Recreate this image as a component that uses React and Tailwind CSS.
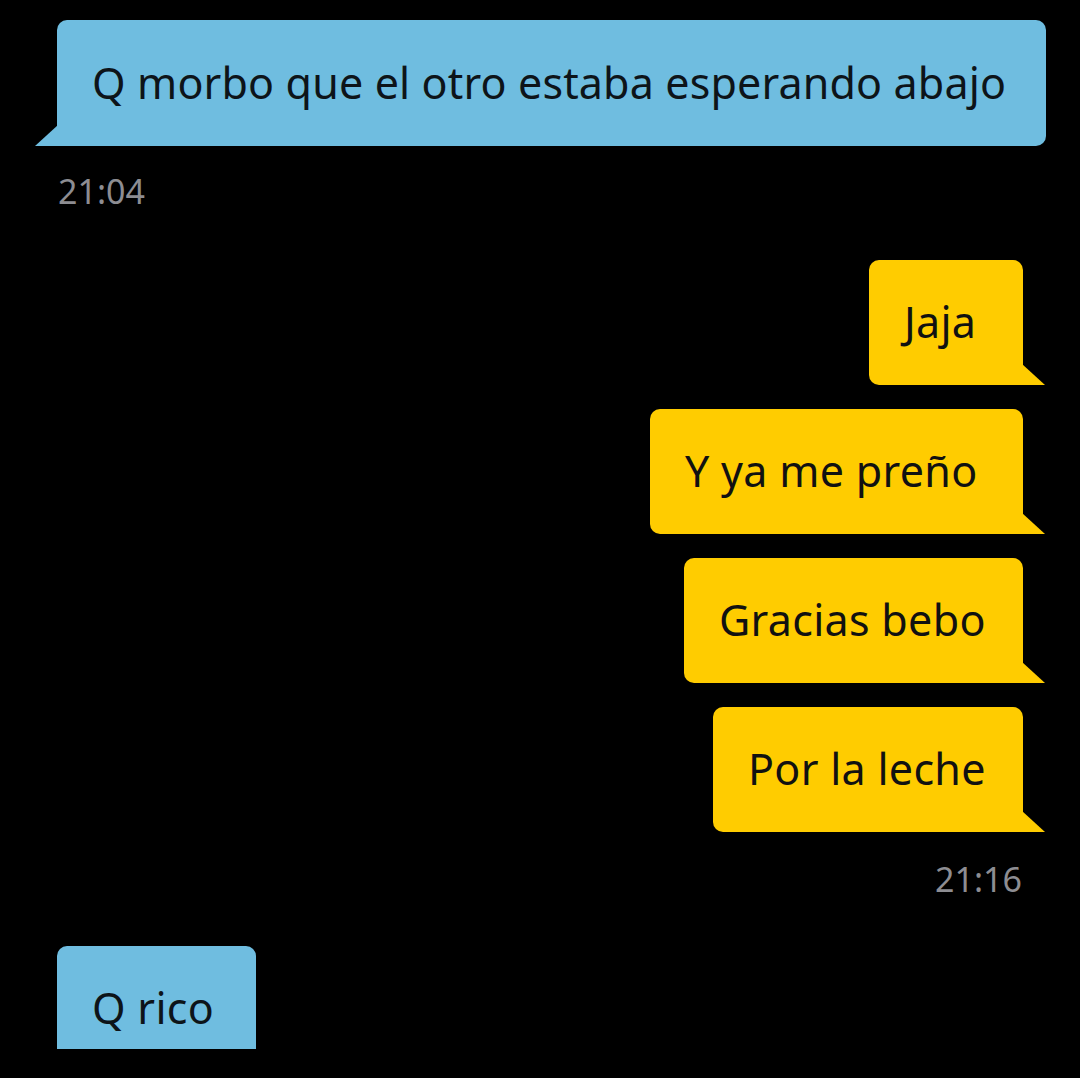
export default function App() {
  const font = { fontFamily: '"Noto Sans", "Open Sans", sans-serif' };

  const TailLeft = ({ color }) => (
    <svg className="absolute left-[-22px] bottom-0" width="23" height="21" viewBox="0 0 23 21">
      <polygon points="23,0 0,21 23,21" fill={color} />
    </svg>
  );

  const TailRight = ({ color }) => (
    <svg className="absolute right-[-22px] bottom-0" width="23" height="21" viewBox="0 0 23 21">
      <polygon points="0,0 23,21 0,21" fill={color} />
    </svg>
  );

  const Mine = ({ text, width }) => (
    <div
      className={`relative flex h-[125px] items-center rounded-t-[10px] rounded-bl-[10px] bg-[#ffcc00] px-[35px] text-[43px] tracking-[0.3px] whitespace-nowrap text-[#111111] ${width}`}
    >
      <span>{text}</span>
      <TailRight color="#ffcc00" />
    </div>
  );

  return (
    <div className="h-[1078px] w-[1080px] overflow-hidden bg-black pt-[20px]" style={font}>
      <div className="pl-[57px] pr-[34px]">
        <div className="relative flex h-[126px] items-center rounded-t-[10px] rounded-br-[10px] bg-[#6fbde0] px-[35px] text-[43px] tracking-[0.15px] whitespace-nowrap text-[#0d1419]">
          <span>Q morbo que el otro estaba esperando abajo</span>
          <TailLeft color="#6fbde0" />
        </div>
        <div className="mt-[25px] h-[40px] pl-[1px] text-[34px] leading-[40px] text-[#8d8d92]">21:04</div>
      </div>

      <div className="mt-[49px] flex flex-col items-end gap-[24px] pr-[57px]">
        <Mine text="Jaja" width="w-[154px]" />
        <Mine text="Y ya me preño" width="w-[373px]" />
        <Mine text="Gracias bebo" width="w-[339px]" />
        <Mine text="Por la leche" width="w-[310px]" />
      </div>

      <div className="mt-[27px] flex h-[40px] justify-end pr-[58px] text-[34px] leading-[40px] text-[#8d8d92]">21:16</div>

      <div className="mt-[47px] h-[103px] overflow-hidden pl-[57px]">
        <div className="flex h-[124px] w-[199px] items-center rounded-t-[10px] bg-[#6fbde0] px-[35px] text-[43px] tracking-[0.3px] text-[#0d1419]">
          <span>Q rico</span>
        </div>
      </div>
    </div>
  );
}
